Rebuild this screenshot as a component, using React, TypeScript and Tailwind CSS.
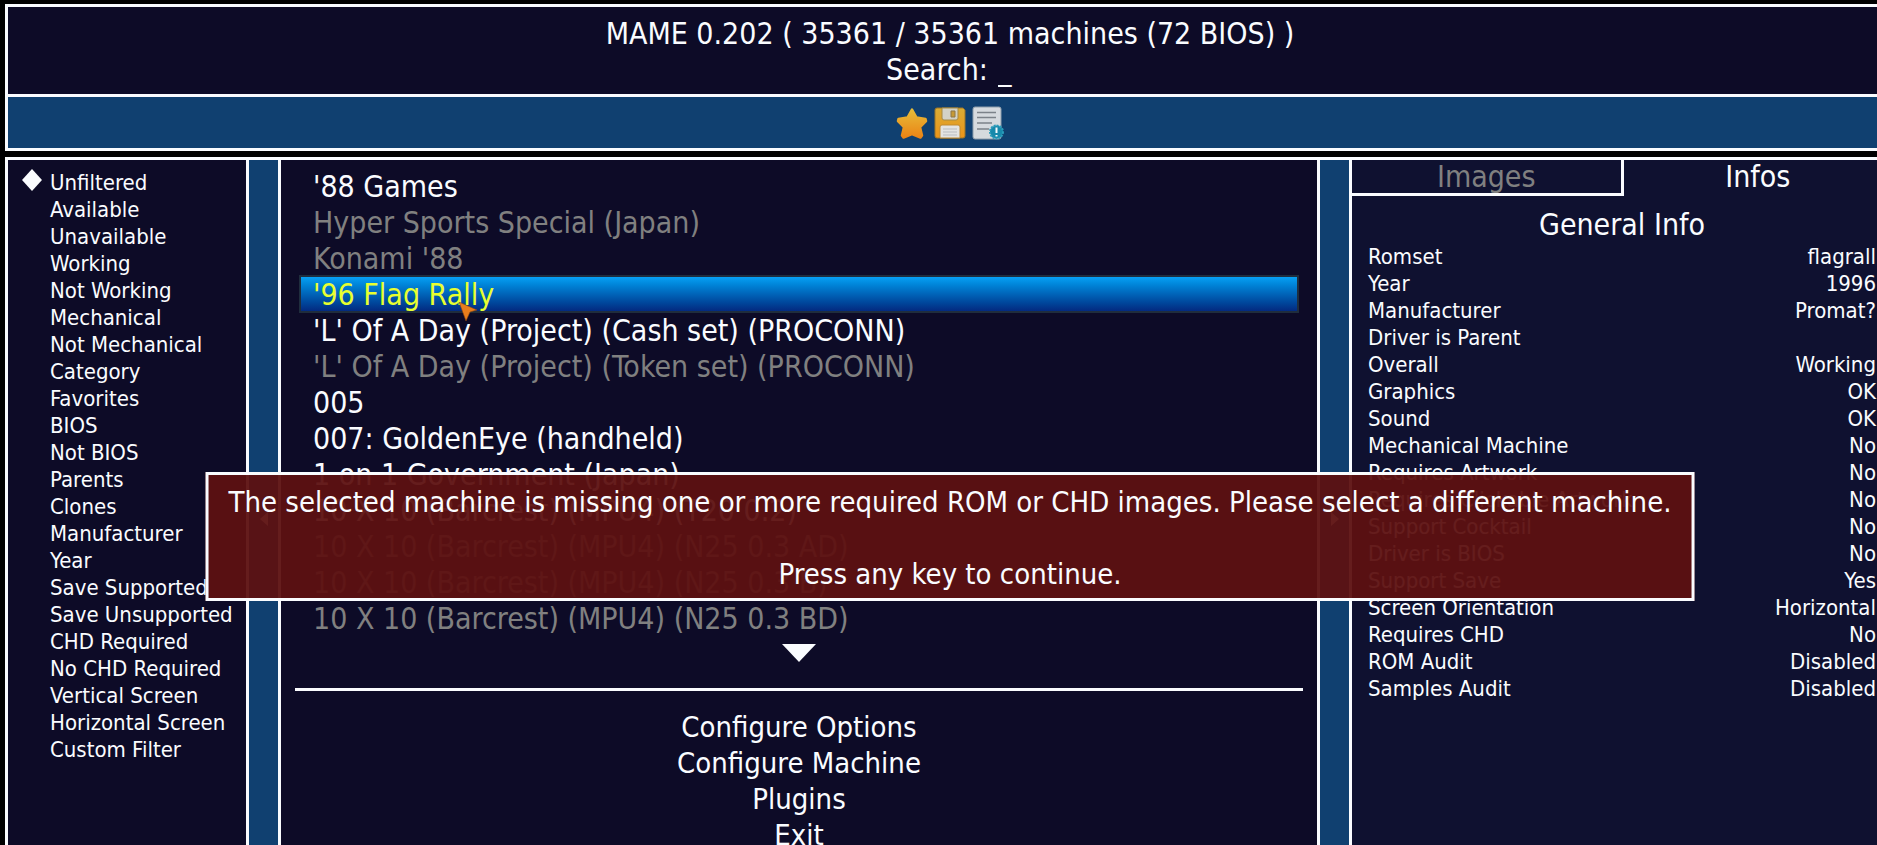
import React from 'react';

const filters = [
    'Unfiltered', 'Available', 'Unavailable', 'Working', 'Not Working', 'Mechanical', 'Not Mechanical', 'Category',
    'Favorites', 'BIOS', 'Not BIOS', 'Parents', 'Clones', 'Manufacturer', 'Year', 'Save Supported', 'Save Unsupported',
    'CHD Required', 'No CHD Required', 'Vertical Screen', 'Horizontal Screen', 'Custom Filter',
];

const machines = [
    { name: "'88 Games" },
    { name: 'Hyper Sports Special (Japan)', clone: true },
    { name: "Konami '88", clone: true },
    { name: "'96 Flag Rally", selected: true },
    { name: "'L' Of A Day (Project) (Cash set) (PROCONN)" },
    { name: "'L' Of A Day (Project) (Token set) (PROCONN)", clone: true },
    { name: '005' },
    { name: '007: GoldenEye (handheld)' },
    { name: '1 on 1 Government (Japan)' },
    { name: '10 X 10 (Barcrest) (MPU4) (T20 0.2)' },
    { name: '10 X 10 (Barcrest) (MPU4) (N25 0.3 AD)', clone: true },
    { name: '10 X 10 (Barcrest) (MPU4) (N25 0.3 B)', clone: true },
    { name: '10 X 10 (Barcrest) (MPU4) (N25 0.3 BD)', clone: true },
];

const options = ['Configure Options', 'Configure Machine', 'Plugins', 'Exit'];

const infos = [
    ['Romset', 'flagrall'],
    ['Year', '1996'],
    ['Manufacturer', 'Promat?'],
    ['Driver is Parent', ''],
    ['Overall', 'Working'],
    ['Graphics', 'OK'],
    ['Sound', 'OK'],
    ['Mechanical Machine', 'No'],
    ['Requires Artwork', 'No'],
    ['Requires Clickable Artwork', 'No'],
    ['Support Cocktail', 'No'],
    ['Driver is BIOS', 'No'],
    ['Support Save', 'Yes'],
    ['Screen Orientation', 'Horizontal'],
    ['Requires CHD', 'No'],
    ['ROM Audit', 'Disabled'],
    ['Samples Audit', 'Disabled'],
];

export default function App() {
    return (
        <div className="h-screen overflow-hidden bg-black font-['DejaVu_Sans_Condensed','Noto_Sans',sans-serif] text-[30px] leading-9 text-[#fafcff]">
            {/* The menu is a little wider than the window and is cut off on the right */}
            <div className="relative flex h-full w-[calc(100%+18px)] flex-col gap-1.5 pt-1 pl-[5px]">
                <Header />
                <main className="flex min-h-0 flex-1 border-3 border-b-0 border-[#fafcff] bg-[#104070]">
                    <FilterPanel />
                    <Gutter direction="left" />
                    <MachinePanel />
                    <Gutter direction="right" />
                    <InfoPanel />
                </main>
                <MissingRomMessage />
            </div>
        </div>
    );
}

function Header() {
    return (
        <header className="border-3 border-[#fafcff] bg-[#0d0b27] text-center">
            <div className="pt-[9px] pb-1.5">
                <h1>MAME 0.202 ( 35361 / 35361 machines (72 BIOS) )</h1>
                <label className="flex justify-center gap-2.5">
                    Search:
                    <input className="w-4 bg-transparent outline-none" defaultValue="_" />
                </label>
            </div>
            <div className="flex h-[54px] items-center justify-center gap-1.5 border-t-3 border-[#fafcff] bg-[#104070]">
                <button aria-label="Add to favorites"><StarIcon /></button>
                <button aria-label="Export list"><FloppyIcon /></button>
                <button aria-label="Show info"><DocumentIcon /></button>
            </div>
        </header>
    );
}

function FilterPanel() {
    return (
        <nav className="w-[241px] shrink-0 border-r-3 border-[#fafcff] bg-[#0d0b27] pt-[9px] text-[22px] leading-[27px]">
            {filters.map((filter, i) => (
                <button key={filter} className="flex w-full items-start pl-3.5 whitespace-nowrap">
                    <span className="w-7 shrink-0">
                        {i === 0 && (
                            <svg className="h-6 w-5" viewBox="0 0 20 24" fill="currentColor">
                                <path d="M10 0L20 11L10 22L0 11Z" />
                            </svg>
                        )}
                    </span>
                    {filter}
                </button>
            ))}
        </nav>
    );
}

function Gutter({ direction }: { direction: 'left' | 'right' }) {
    return (
        <button aria-label={`Toggle ${direction} panel`} className="flex w-[29px] shrink-0 justify-center pt-[352px]">
            <svg className="h-3.5 w-2" viewBox="0 0 8 14" fill="currentColor">
                <path d={direction === 'left' ? 'M8 0V14L0 7Z' : 'M0 0V14L8 7Z'} />
            </svg>
        </button>
    );
}

function MachinePanel() {
    return (
        <section className="min-w-0 flex-1 border-x-3 border-[#fafcff] bg-[#0d0b27] px-3.5 pt-[9px]">
            <ul className="px-1">
                {machines.map((machine) => (
                    <li key={machine.name} className="relative h-9">
                        <button
                            className={
                                machine.selected
                                    ? '-mt-0.5 h-[38px] w-full border-2 border-[#1f2d3d] bg-linear-to-b from-[#08a0f4] to-[#042a80] pt-0.5 pl-3 text-left leading-8 text-[#e8ff30]'
                                    : machine.clone
                                      ? 'h-9 w-full pl-3.5 text-left text-[#808080]'
                                      : 'h-9 w-full pl-3.5 text-left'
                            }
                        >
                            {machine.name}
                        </button>
                        {machine.selected && <Pointer />}
                    </li>
                ))}
            </ul>
            <div className="flex h-[51px] justify-center pt-[7px]">
                <svg className="h-[18px] w-[34px]" viewBox="0 0 34 18" fill="currentColor">
                    <path d="M0 0H34L17 18Z" />
                </svg>
            </div>
            <div className="flex flex-col border-t-3 border-[#fafcff] pt-[18px] text-[29px]">
                {options.map((option) => (
                    <button key={option}>{option}</button>
                ))}
            </div>
        </section>
    );
}

function InfoPanel() {
    return (
        <section className="w-[543px] shrink-0 border-l-3 border-[#fafcff] bg-[#0f1130]">
            <div className="flex" role="tablist">
                <button role="tab" aria-selected={false} className="h-9 flex-1 border-r-3 border-b-3 border-[#fafcff] pt-px leading-8 text-[#808080]">
                    Images
                </button>
                <button role="tab" aria-selected={true} className="h-9 flex-1 pb-0.5 leading-8">
                    Infos
                </button>
            </div>
            <h2 className="pt-[11px] text-center">General Info</h2>
            <table className="ml-4 w-[508px] text-[22px] leading-[27px]">
                <tbody>
                    {infos.map(([label, value]) => (
                        <tr key={label}>
                            <th scope="row" className="p-0 text-left font-normal">{label}</th>
                            <td className="p-0 text-right">{value}</td>
                        </tr>
                    ))}
                </tbody>
            </table>
        </section>
    );
}

function MissingRomMessage() {
    return (
        <div
            role="alertdialog"
            className="absolute top-[472px] left-[950px] -translate-x-1/2 border-3 border-[#fafcff] bg-[#5d1111]/95 px-5 pt-[9px] pb-1.5 text-center text-[29px] whitespace-nowrap"
        >
            <p className="pb-9">
                The selected machine is missing one or more required ROM or CHD images. Please select a different machine.
            </p>
            <p>Press any key to continue.</p>
        </div>
    );
}

function Pointer() {
    return (
        <svg className="absolute top-[25px] left-40 h-5 w-[18px]" viewBox="0 0 18 20">
            <path d="M0 0L18 8L11 10L7 19Z" fill="#e87d1c" stroke="#8a4410" strokeWidth="0.6" />
        </svg>
    );
}

function StarIcon() {
    return (
        <svg className="block size-8" viewBox="0 0 32 32">
            <defs>
                <linearGradient id="star" x1="0" y1="0" x2="0" y2="1">
                    <stop offset="0" stopColor="#e8bc38" />
                    <stop offset="1" stopColor="#ea8416" />
                </linearGradient>
            </defs>
            <path
                d="M16 2.5L20.5 10.5L29.5 12L30 14L24 20L26 28.5L24.5 30.5L16 27L7.5 30.5L6 28.5L8 20L2 14L2.5 12L11.5 10.5Z"
                fill="url(#star)"
                stroke="url(#star)"
                strokeWidth="2.5"
                strokeLinejoin="round"
            />
        </svg>
    );
}

function FloppyIcon() {
    return (
        <svg className="block size-8" viewBox="0 0 32 32">
            <defs>
                <linearGradient id="floppy" x1="0" y1="0" x2="0" y2="1">
                    <stop offset="0" stopColor="#d9ac35" />
                    <stop offset="1" stopColor="#ec9418" />
                </linearGradient>
            </defs>
            <path d="M3 1H29L31 3V29Q31 31 29 31H3Q1 31 1 29V3Q1 1 3 1Z" fill="url(#floppy)" stroke="#9c7426" />
            <path d="M8 1H24V11Q24 13 22 13H10Q8 13 8 11Z" fill="#d3d2c6" stroke="#a68a45" />
            <path d="M17 4H21V10H17Z" fill="#c79a35" stroke="#8d7748" />
            <path d="M6 31V20Q6 18 8 18H24Q26 18 26 20V31Z" fill="#e4e4e2" stroke="#c08a30" />
            <path d="M9 22H23M9 25H23M9 28H23" stroke="#b9bcc0" />
        </svg>
    );
}

function DocumentIcon() {
    return (
        <svg className="block h-[34px] w-8" viewBox="0 0 32 34">
            <rect x="1" y="1" width="28" height="32" rx="2" fill="#d5dade" stroke="#8e9eac" />
            <path d="M5 6.5H24M5 11.5H24M5 17H20M5 23H17" stroke="#7b8289" strokeWidth="1.5" />
            <circle cx="24.5" cy="26" r="6.5" fill="#1789ab" stroke="#2a9cba" strokeWidth="2" strokeDasharray="2 1" />
            <path d="M24.5 21.5V27M24.5 29V30.5" stroke="#f4fbfd" strokeWidth="2" />
        </svg>
    );
}
